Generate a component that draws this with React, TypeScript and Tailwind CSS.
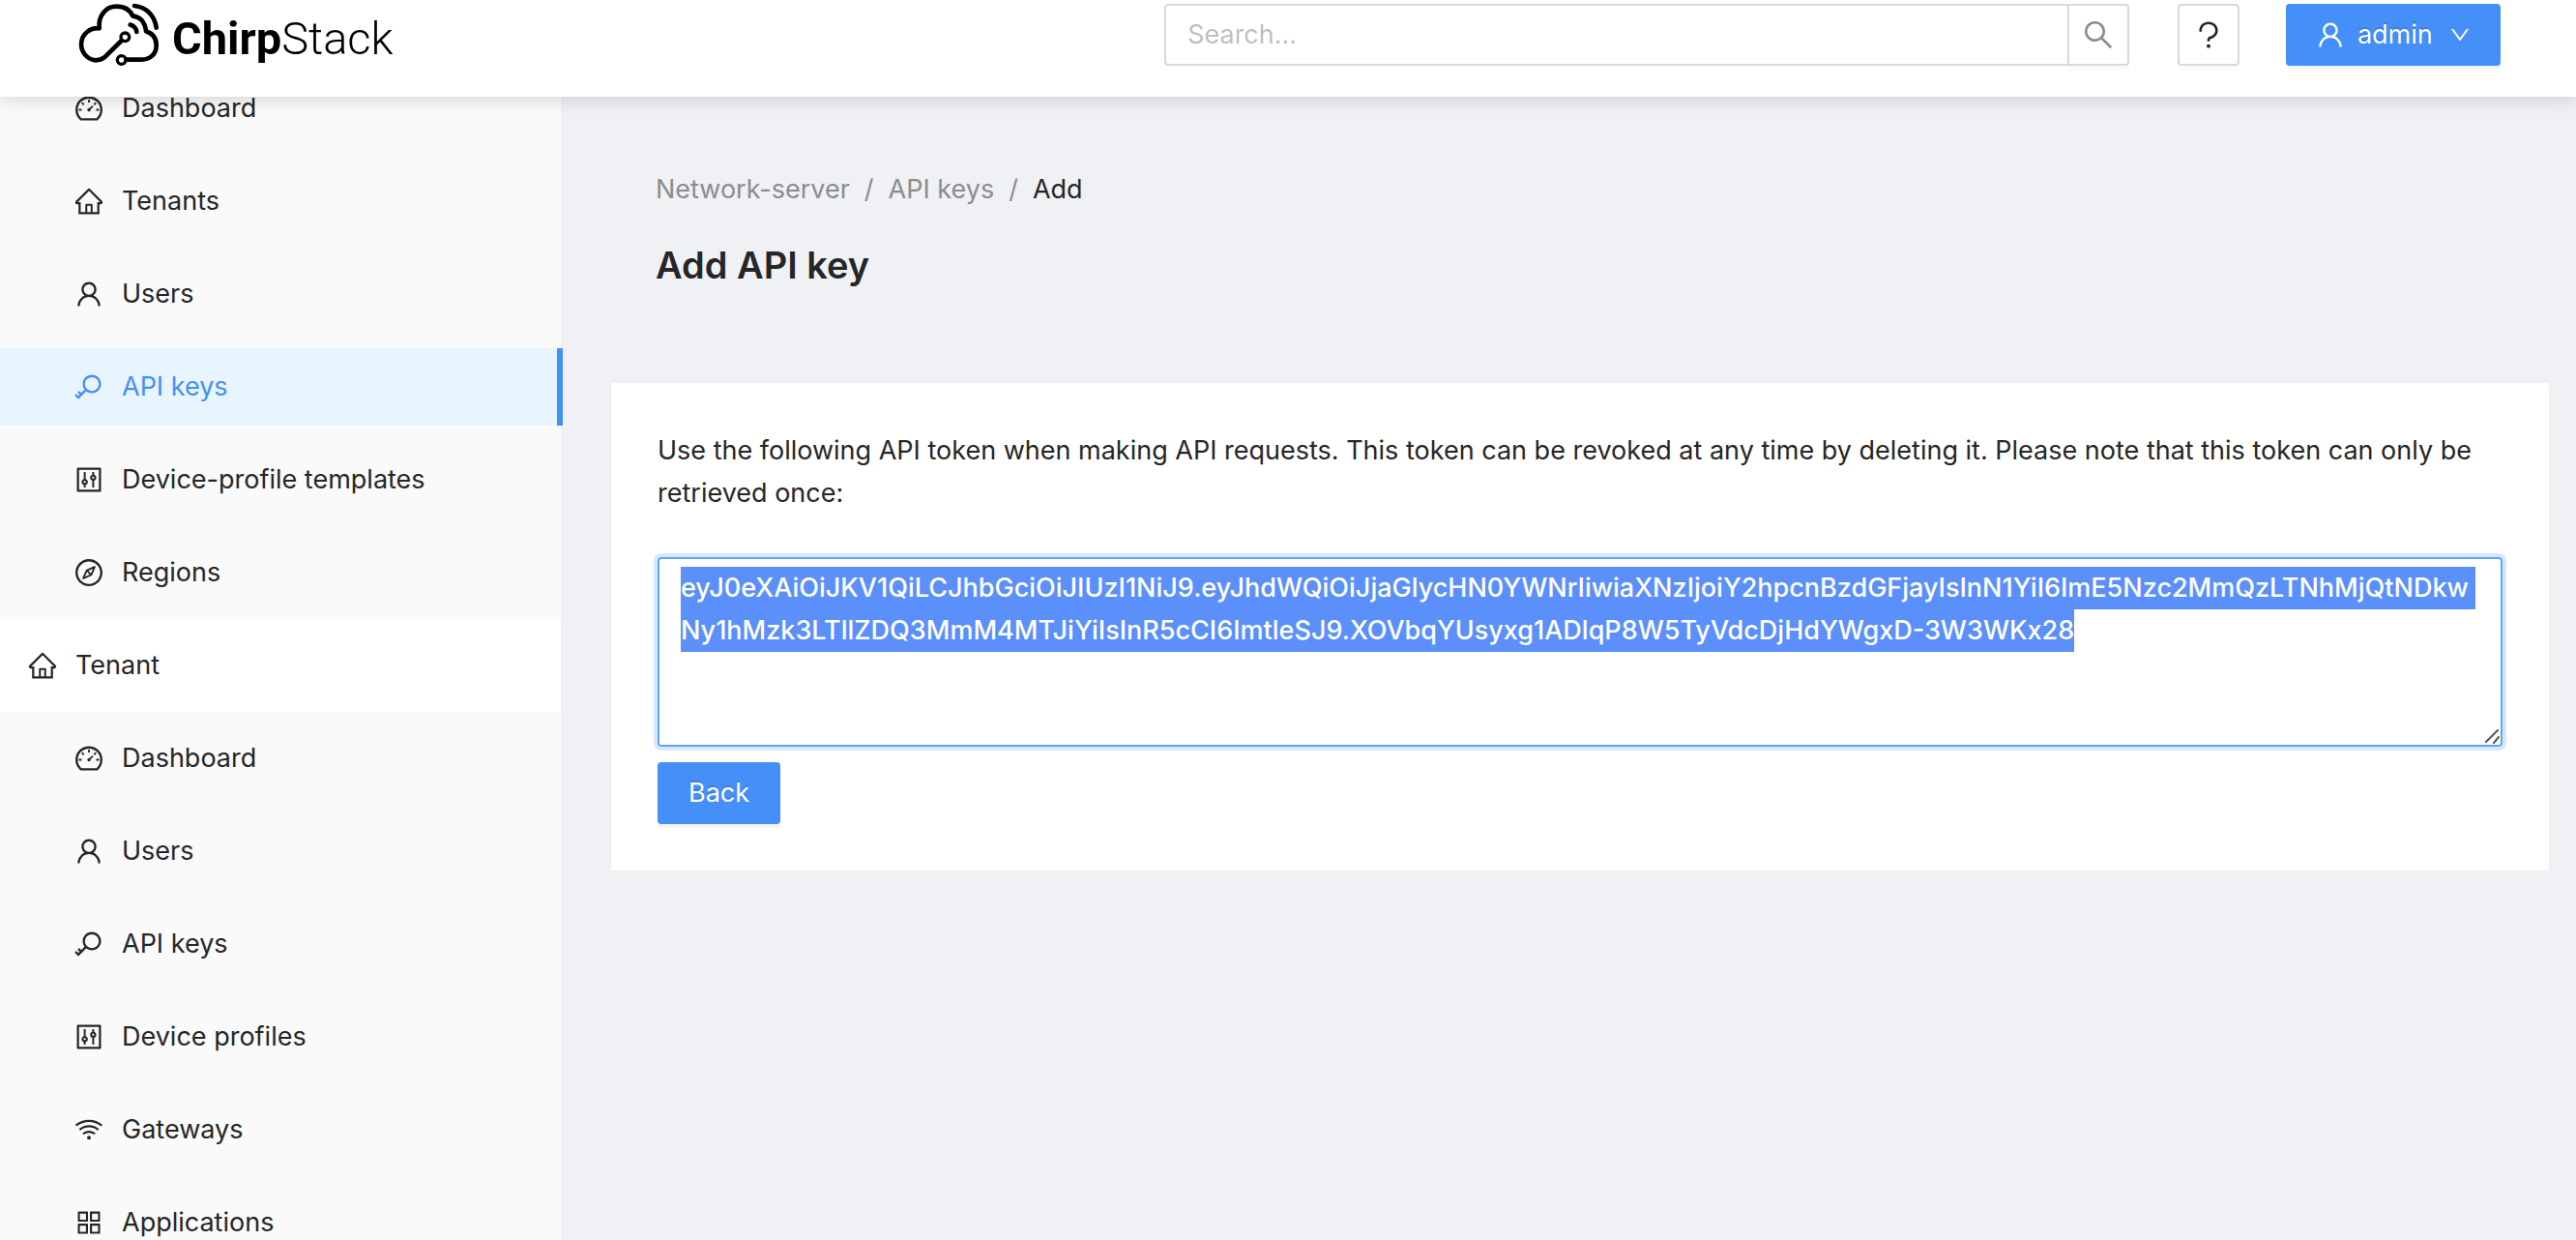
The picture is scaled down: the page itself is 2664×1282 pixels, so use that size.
import { useEffect, useRef } from "react";
import type { IconType } from "react-icons";
import {
  AiOutlineAppstore,
  AiOutlineCompass,
  AiOutlineControl,
  AiOutlineDashboard,
  AiOutlineDown,
  AiOutlineHome,
  AiOutlineKey,
  AiOutlineQuestion,
  AiOutlineSearch,
  AiOutlineUser,
  AiOutlineWifi,
} from "react-icons/ai";

const TOKEN =
  "eyJ0eXAiOiJKV1QiLCJhbGciOiJIUzI1NiJ9.eyJhdWQiOiJjaGlycHN0YWNrIiwiaXNzIjoiY2hpcnBzdGFjayIsInN1YiI6ImE5Nzc2MmQzLTNhMjQtNDkwNy1hMzk3LTllZDQ3MmM4MTJiYiIsInR5cCI6ImtleSJ9.XOVbqYUsyxg1ADlqP8W5TyVdcDjHdYWgxD-3W3WKx28";

type Entry = { label: string; icon: IconType; active?: boolean };

const networkServer: Entry[] = [
  { label: "Dashboard", icon: AiOutlineDashboard },
  { label: "Tenants", icon: AiOutlineHome },
  { label: "Users", icon: AiOutlineUser },
  { label: "API keys", icon: AiOutlineKey, active: true },
  { label: "Device-profile templates", icon: AiOutlineControl },
  { label: "Regions", icon: AiOutlineCompass },
];

const tenant: Entry[] = [
  { label: "Dashboard", icon: AiOutlineDashboard },
  { label: "Users", icon: AiOutlineUser },
  { label: "API keys", icon: AiOutlineKey },
  { label: "Device profiles", icon: AiOutlineControl },
  { label: "Gateways", icon: AiOutlineWifi },
  { label: "Applications", icon: AiOutlineAppstore },
];

function SubMenu({ entries }: { entries: Entry[] }) {
  return (
    <ul className="flex flex-col gap-4 bg-[#fafafa] py-2">
      {entries.map(({ label, icon: Icon, active }) => (
        <li key={label}>
          <a
            href="#"
            aria-current={active ? "page" : undefined}
            className={
              active
                ? "-mr-0.5 flex h-20 items-center gap-[18px] border-r-[6px] border-[#448ff8] bg-[#e8f5fe] pl-[76px] text-[#448ff8]"
                : "flex h-20 items-center gap-[18px] pl-[76px]"
            }
          >
            <Icon className="size-8 shrink-0" />
            {label}
          </a>
        </li>
      ))}
    </ul>
  );
}

function Logo() {
  return (
    <a href="#" className="flex items-center gap-3 text-black" aria-label="ChirpStack">
      <svg
        viewBox="60 6 264 204"
        className="h-[68px] w-[88px]"
        fill="none"
        stroke="currentColor"
        strokeWidth="14"
        strokeLinecap="round"
        strokeLinejoin="round"
      >
        <path d="M203 126 L150 178 C142 185 134 187 122 187 A49.500 49.500 0 1 1 134 88 C130 48 155 20 187 20 C212 20 230 32 238 50 C262 52 276 70 279 97 C300 104 311 120 311 140 C311 168 292 185 265 185 H218" />
        <circle cx="214" cy="115" r="13" strokeWidth="10" />
        <circle cx="203" cy="186" r="13" strokeWidth="10" />
        <path d="M243 18 C280 22 306 48 311 86" />
        <path d="M230 77 C241 79 249 88 250 99" />
      </svg>
      <span className="pt-2 font-[Roboto,sans-serif] text-[47px] leading-[56px]">
        <span className="font-bold">Chirp</span>
        <span className="font-light">Stack</span>
      </span>
    </a>
  );
}

export default function App() {
  const tokenRef = useRef<HTMLTextAreaElement>(null);

  useEffect(() => {
    tokenRef.current?.focus();
    tokenRef.current?.select();
  }, []);

  return (
    <div className="flex h-screen overflow-hidden bg-[#f0f1f5] font-[Inter,sans-serif] text-[27px] leading-[44px] text-[#262626]">
      <header className="fixed inset-x-0 top-0 z-10 flex h-[100px] items-start bg-white px-[78px] shadow-[0_0_20px_rgba(0,0,0,0.2)]">
        <div className="pt-0.5">
          <Logo />
        </div>
        <div className="ml-auto flex items-center gap-12 pt-1">
          <form role="search" className="mr-0.5 flex h-16 w-[998px]">
            <input
              type="text"
              aria-label="Search"
              placeholder="Search..."
              className="min-w-0 flex-1 rounded-l-sm border-2 border-r-0 border-[#d9d9d9] px-[22px] placeholder:text-[#bfbfbf]"
            />
            <button
              type="button"
              aria-label="Submit search"
              className="flex w-16 items-center justify-center rounded-r-sm border-2 border-[#d9d9d9] text-[#8c8c8c] shadow-[0_4px_0_rgba(0,0,0,0.015)]"
            >
              <AiOutlineSearch className="size-9" />
            </button>
          </form>
          <button
            type="button"
            aria-label="Help"
            className="flex size-16 items-center justify-center rounded-sm border-2 border-[#d9d9d9] shadow-[0_4px_0_rgba(0,0,0,0.015)]"
          >
            <AiOutlineQuestion className="size-9" />
          </button>
          <button
            type="button"
            className="flex h-16 items-center rounded-sm bg-[#448ff8] px-[30px] text-white shadow-[0_4px_0_rgba(0,0,0,0.045)] text-shadow-[0_-2px_0_rgba(0,0,0,0.12)]"
          >
            <AiOutlineUser className="mr-3 size-8" />
            admin
            <AiOutlineDown className="ml-4 size-6" />
          </button>
        </div>
      </header>

      <nav aria-label="Main" className="w-[582px] shrink-0 border-r-2 border-[#f0f0f0] bg-white pt-16">
        <SubMenu entries={networkServer} />
        <button type="button" className="flex h-24 w-full items-center gap-[18px] bg-white pl-7 text-left">
          <AiOutlineHome className="size-8" />
          Tenant
        </button>
        <SubMenu entries={tenant} />
      </nav>

      <main className="min-w-0 flex-1 pt-[174px] pr-[26px] pl-12">
        <div className="px-12">
          <nav aria-label="Breadcrumb">
            <ol className="flex gap-[15px] text-[#8c8c8c]">
              <li>
                <a href="#">Network-server</a>
              </li>
              <li aria-hidden="true">/</li>
              <li>
                <a href="#">API keys</a>
              </li>
              <li aria-hidden="true">/</li>
              <li aria-current="page" className="text-[#262626]">
                Add
              </li>
            </ol>
          </nav>
          <h1 className="mt-6 text-[38px] leading-[64px] font-semibold">Add API key</h1>
        </div>

        <section className="mt-[88px] rounded-sm border-2 border-[#f0f0f0] bg-white p-12">
          <label htmlFor="token" className="block">
            Use the following API token when making API requests. This token can be revoked at any time by deleting it.
            Please note that this token can only be retrieved once:
          </label>
          <div className="relative mt-11">
            <textarea
              id="token"
              ref={tokenRef}
              readOnly
              rows={4}
              defaultValue={TOKEN}
              className="block w-full resize-y rounded-sm border-2 border-[#5ca6f9] px-[22px] py-2 font-medium break-all shadow-[0_0_0_4px_#d9e7fd] outline-none selection:bg-[#5b8ff9] selection:text-white [&::-webkit-resizer]:bg-transparent"
            />
            <svg
              viewBox="0 0 16 16"
              className="pointer-events-none absolute right-[3px] bottom-[3px] size-4"
              fill="none"
              stroke="#555555"
              strokeWidth="2"
              strokeLinecap="round"
              aria-hidden="true"
            >
              <path d="M2 14 L14 2 M10 15 L15 9" />
            </svg>
          </div>
          <button
            type="button"
            className="mt-4 block h-16 rounded-sm bg-[#448ff8] px-8 text-white shadow-[0_4px_0_rgba(0,0,0,0.045)] text-shadow-[0_-2px_0_rgba(0,0,0,0.12)]"
          >
            Back
          </button>
        </section>
      </main>
    </div>
  );
}
